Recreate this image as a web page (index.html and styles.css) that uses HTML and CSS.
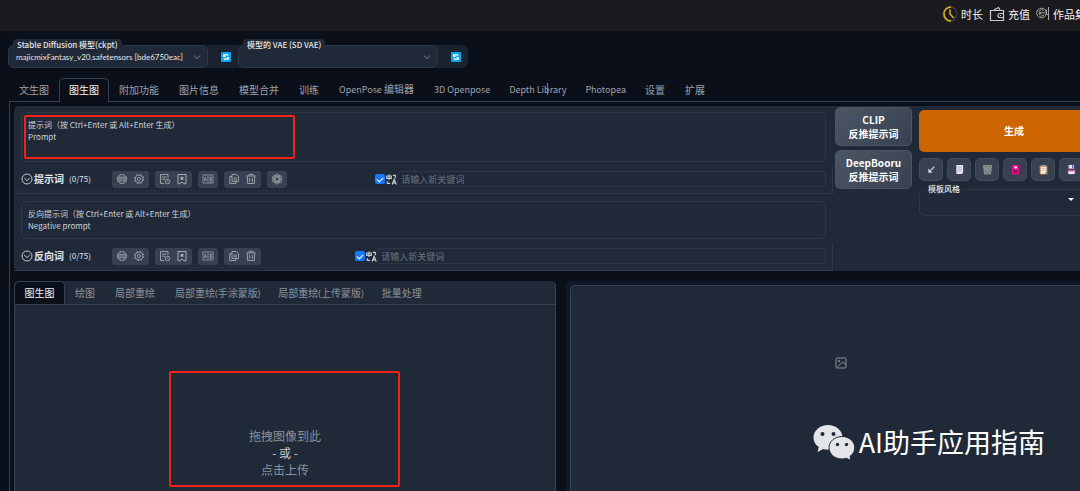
FILE: index.html
```html
<!DOCTYPE html>
<html lang="zh-CN">
<head>
<meta charset="utf-8">
<title>Stable Diffusion</title>
<link rel="stylesheet" href="styles.css">
</head>
<body>
<svg class="sprite" aria-hidden="true">
  <symbol id="refresh" viewBox="0 0 10 10"><rect width="10" height="10" rx="1" fill="#0aa5ee"/><path d="M2.5 4.6V2.6M2.5 4.3h2M2.7 4.1c.8-1.7 3.4-2 4.5-.4M7.5 5.4v2M7.5 5.7h-2M7.3 5.9c-.8 1.7-3.4 2-4.5.4" fill="none" stroke="#fff" stroke-width="1.2"/></symbol>
  <symbol id="chev" viewBox="0 0 8 8"><path d="M1 2.5l3 3 3-3" fill="none" stroke="#7d8590"/></symbol>
  <symbol id="fold" viewBox="0 0 12 12"><circle cx="6" cy="6" r="5" fill="none" stroke="#c3c7cd"/><path d="M3.2 5l2.8 2.6L8.8 5" fill="none" stroke="#c3c7cd"/></symbol>
  <symbol id="globe" viewBox="0 0 12 12"><g fill="none" stroke="#8f959e"><circle cx="6" cy="6" r="4.6"/><path d="M1.5 4.3h9M1.5 6h9M1.5 7.8h9"/><ellipse cx="6" cy="6" rx="2.2" ry="4.6" stroke-width=".6"/></g></symbol>
  <symbol id="gear" viewBox="0 0 12 12"><g fill="none" stroke="#8f959e"><circle cx="6" cy="6" r="3.9"/><circle cx="6" cy="6" r="4.7" stroke-dasharray="1.8 1.9"/><circle cx="6" cy="6" r="1.6"/></g></symbol>
  <symbol id="history" viewBox="0 0 12 12"><g fill="none" stroke="#9aa0a8"><path d="M9 5V1.5H1.5v9H5M3 4h4.5M3 6.2h3"/><circle cx="8.5" cy="8.5" r="2.3"/><path d="M8.5 7.3v1.4h1" stroke-width=".7"/></g></symbol>
  <symbol id="mark" viewBox="0 0 12 12"><path d="M2 1.5h8v9.2H8L6 9l-2 1.7H2z" fill="none" stroke="#a9aeb5"/><path d="M6 3l.7 1.4 1.5.2-1.1 1 .3 1.5L6 6.4l-1.4.7.3-1.5-1.1-1 1.5-.2z" fill="#b9bdc3"/></symbol>
  <symbol id="lang" viewBox="0 0 12 12"><g fill="none" stroke="#8f959e" stroke-width=".9"><path d="M5 2H1v8h4M7 2h4v8H7M6 1v10M2.2 8l1.2-4 1.2 4M2.6 6.8h1.6M7.4 4.5h2.8M7.4 6.2h2.8M8.8 3.5v5M7.5 8.2h2.5"/></g></symbol>
  <symbol id="copy" viewBox="0 0 12 12"><g fill="none" stroke="#9aa0a8"><path d="M4 1.5h4.5L10.5 3.500v5H4z"/><path d="M4 3.500H1.800v7H8v-2M5.500 5h3.500M5.500 6.800h3.500"/></g></symbol>
  <symbol id="trash" viewBox="0 0 12 12"><path d="M1 3h10M4 3V1.300h4V3M2.300 3.500l.4 7h6.600l.4-7M4.700 5v4M7.300 5v4" fill="none" stroke="#9aa0a8"/></symbol>
  <symbol id="ai" viewBox="0 0 12 12"><g fill="none" stroke="#8f959e" stroke-width=".9"><circle cx="6" cy="6" r="2"/><ellipse cx="6" cy="6" rx="2.600" ry="5"/><ellipse cx="6" cy="6" rx="2.600" ry="5" transform="rotate(60 6 6)"/><ellipse cx="6" cy="6" rx="2.600" ry="5" transform="rotate(120 6 6)"/></g></symbol>
  <symbol id="trans" viewBox="0 0 12 12"><g fill="none" stroke="#c9ccd1" stroke-width="1.300"><path d="M.8 2.200h5v2.500h-5zM3.300.5v6M7.500 1.500h2.600v3M1.500 8v2.300H4.500M6.700 11.500L8.900 5.800l2.200 5.700M7.500 9.700h2.900"/></g></symbol>
</svg>

<header class="topbar">
  <a class="toplink" href="#"><svg class="ic16" viewBox="0 0 16 16" fill="none"><circle cx="8" cy="8" r="7" stroke="#3a3a40" stroke-width="1.500"/><path d="M9 15A7 7 0 1 1 9 1M8 3.500V8l3.800 4" stroke="#e3b712" stroke-width="1.500"/></svg>时长</a>
  <a class="toplink" href="#"><svg class="ic16" viewBox="0 0 16 16" fill="none" stroke="#c8c8ca" stroke-width="1.200"><path d="M1.500 4.500h13v10h-13zM5 4l4.500-2.500L11 4M14.500 7.500H11a2 2 0 0 0 0 4h3.500M11 9.500h1"/></svg>充值</a>
  <a class="toplink" href="#"><svg class="ic14" viewBox="0 0 14 14" fill="none" stroke="#a5a5a8"><circle cx="5.500" cy="6" r="4.800"/><path d="M12.500 0v13M10.500 2.500v5h2M2.500 4.500l3-2 2 1M3 8l3-2.500 3 .5M4.500 9.500L8 8"/><circle cx="4" cy="6" r=".8"/></svg>作品集</a>
</header>

<main class="app">
  <div class="quick">
    <div class="field">
      <label class="chip" for="ckpt">Stable Diffusion 模型(ckpt)</label>
      <select id="ckpt" class="select"><option>majicmixFantasy_v20.safetensors [bde6750eac]</option></select>
      <svg class="chev"><use href="#chev"/></svg>
    </div>
    <button class="refresh" aria-label="刷新模型"><svg><use href="#refresh"/></svg></button>
    <div class="field">
      <label class="chip" for="vae">模型的 VAE (SD VAE)</label>
      <select id="vae" class="select"><option></option></select>
      <svg class="chev"><use href="#chev"/></svg>
    </div>
    <button class="refresh" aria-label="刷新 VAE"><svg><use href="#refresh"/></svg></button>
  </div>

  <nav class="tabs">
    <button class="tab">文生图</button><button class="tab active">图生图</button><button class="tab">附加功能</button><button class="tab">图片信息</button><button class="tab">模型合并</button><button class="tab">训练</button><button class="tab"><span class="latin">OpenPose</span> 编辑器</button><button class="tab latin">3D Openpose</button><button class="tab latin pointed">Depth Library</button><button class="tab latin">Photopea</button><button class="tab">设置</button><button class="tab">扩展</button>
  </nav>

  <div class="workspace">
    <section class="prompts">
      <div class="prompt-col">
        <div class="prompt-wrap">
          <textarea class="prompt tall" aria-label="提示词" placeholder="提示词（按 Ctrl+Enter 或 Alt+Enter 生成）&#10;Prompt"></textarea>
          <div class="callout callout-prompt"></div>
        </div>
        <div class="bar">
          <svg class="ic12"><use href="#fold"/></svg><b class="bar-title">提示词</b><span class="count">(0/75)</span>
          <div class="groups">
            <div class="group"><button class="mini" aria-label="语言"><svg><use href="#globe"/></svg></button><button class="mini" aria-label="设置"><svg><use href="#gear"/></svg></button></div>
            <div class="group"><button class="mini" aria-label="历史"><svg><use href="#history"/></svg></button><button class="mini" aria-label="收藏"><svg><use href="#mark"/></svg></button></div>
            <div class="group"><button class="mini" aria-label="翻译"><svg><use href="#lang"/></svg></button></div>
            <div class="group"><button class="mini" aria-label="复制"><svg><use href="#copy"/></svg></button><button class="mini" aria-label="删除"><svg><use href="#trash"/></svg></button></div>
            <div class="group"><button class="mini" aria-label="AI"><svg><use href="#ai"/></svg></button></div>
          </div>
          <div class="keyword">
            <input class="check" type="checkbox" id="k1" checked><label class="trans" for="k1" aria-label="自动翻译"><svg><use href="#trans"/></svg></label>
            <input class="kw" type="text" aria-label="关键词" placeholder="请输入新关键词">
          </div>
        </div>
        <div class="prompt-wrap second">
          <textarea class="prompt" aria-label="反向提示词" placeholder="反向提示词（按 Ctrl+Enter 或 Alt+Enter 生成）&#10;Negative prompt"></textarea>
        </div>
        <div class="bar">
          <svg class="ic12"><use href="#fold"/></svg><b class="bar-title">反向词</b><span class="count">(0/75)</span>
          <div class="groups">
            <div class="group"><button class="mini" aria-label="语言"><svg><use href="#globe"/></svg></button><button class="mini" aria-label="设置"><svg><use href="#gear"/></svg></button></div>
            <div class="group"><button class="mini" aria-label="历史"><svg><use href="#history"/></svg></button><button class="mini" aria-label="收藏"><svg><use href="#mark"/></svg></button></div>
            <div class="group"><button class="mini" aria-label="翻译"><svg><use href="#lang"/></svg></button></div>
            <div class="group"><button class="mini" aria-label="复制"><svg><use href="#copy"/></svg></button><button class="mini" aria-label="删除"><svg><use href="#trash"/></svg></button></div>
          </div>
          <div class="keyword wide">
            <input class="check" type="checkbox" id="k2" checked><label class="trans" for="k2" aria-label="自动翻译"><svg><use href="#trans"/></svg></label>
            <input class="kw" type="text" aria-label="反向关键词" placeholder="请输入新关键词">
          </div>
        </div>
      </div>

      <div class="interrogate">
        <button class="inter">CLIP<br>反推提示词</button>
        <button class="inter">DeepBooru<br>反推提示词</button>
      </div>

      <div class="actions">
        <button class="generate">生成</button>
        <div class="tools">
          <button class="tool" aria-label="读取参数"><svg viewBox="0 0 12 12"><path d="M9 3L4 8" fill="none" stroke="#d5d7da" stroke-width="1.200"/><path d="M2.500 5v4.500H7z" fill="#d5d7da"/></svg></button>
          <button class="tool" aria-label="文本"><svg viewBox="0 0 12 12"><path d="M2.500 1h7.500v8.500L8.500 11h-6z" fill="#e4dff0"/><path d="M4 3.500h4.500M4 5.500h4.500M4 7.500h4.500" stroke="#a9a1bd" stroke-width=".7"/></svg></button>
          <button class="tool" aria-label="清空"><svg viewBox="0 0 12 12"><path d="M1.500 1.500h9L9.300 11H2.700z" fill="#70777b" stroke="#a0a6a8" stroke-width=".7"/><path d="M2 3l7 7M5 2l5 5M10 3l-7 7M7 2L2 7" stroke="#b7bbbd" stroke-width=".6"/></svg></button>
          <button class="tool" aria-label="卡片"><svg viewBox="0 0 12 12"><rect x="2" y="1" width="8" height="10.500" rx="1" fill="#e50d8b"/><circle cx="6.200" cy="3.800" r="1.500" fill="#ffe3f4"/><path d="M3.500 6.500h5v3.500h-5z" fill="#9d1168"/></svg></button>
          <button class="tool" aria-label="粘贴"><svg viewBox="0 0 12 12"><rect x="1.800" y="1.500" width="8.500" height="10" rx="1" fill="#c58343"/><path d="M3 3h6v5.500L7.500 10.500H3z" fill="#f1eef3"/><path d="M4 1h4v2H4z" fill="#9ba1aa"/><path d="M4 5h4M4 7h4" stroke="#aaa5b3" stroke-width=".7"/></svg></button>
          <button class="tool" aria-label="保存"><svg viewBox="0 0 12 12"><path d="M1 1h8.500L11 2.500V11H1z" fill="#4b4175"/><path d="M3 1h5.500v4H3z" fill="#e9e6ef"/><path d="M6.500 1.500h1.300v2.500H6.500z" fill="#4b4175"/><path d="M2.500 6.500h7V11h-7z" fill="#f5e9f0"/><path d="M2.500 6.500h7v1.500h-7z" fill="#dd4a83"/></svg></button>
        </div>
        <div class="field style-field">
          <label class="chip" for="style">模板风格</label>
          <select id="style" class="select"><option></option></select>
          <span class="caret"></span>
        </div>
      </div>
    </section>

    <div class="panels">
      <section class="input-panel">
        <nav class="subtabs">
          <button class="subtab active">图生图</button><button class="subtab">绘图</button><button class="subtab">局部重绘</button><button class="subtab long">局部重绘(手涂蒙版)</button><button class="subtab long">局部重绘(上传蒙版)</button><button class="subtab">批量处理</button>
        </nav>
        <button class="drop"><span>拖拽图像到此</span><span class="or">- 或 -</span><span>点击上传</span></button>
        <div class="callout callout-drop"></div>
      </section>
      <section class="output-panel">
        <div class="gallery"><svg class="ic12" viewBox="0 0 12 12" fill="none" stroke="#8a919c"><rect x="1" y="1" width="10" height="10" rx="1"/><path d="M2.500 10l5-5L11 8"/><circle cx="4" cy="4" r=".8"/></svg></div>
      </section>
    </div>
  </div>
</main>

<div class="watermark">
  <svg class="wechat" viewBox="0 0 42 37"><path d="M15 1C7 1 .5 6.500.5 13.500c0 4 2 7.300 5.300 9.600L4.500 28l5.500-3c1.500.5 3.200.7 5 .7 8 0 14.500-5.200 14.500-12.200S23 1 15 1z" fill="#e4e5e7"/><path d="M29 12.500c-7.300 0-13 5-13 11.200S21.700 35 29 35c1.500 0 3-.2 4.400-.7l4.600 2-1-4c3-2 4.700-5 4.700-8.600 0-6.200-5.400-11.200-12.700-11.200z" fill="#e4e5e7" stroke="#1f2937"/><g fill="#1f2937"><circle cx="9.500" cy="10" r="2"/><circle cx="20.500" cy="10" r="2"/><circle cx="24.500" cy="20.500" r="1.700"/><circle cx="33.500" cy="20.500" r="1.700"/></g></svg>
  <span>AI助手应用指南</span>
</div>
</body>
</html>
```
FILE: styles.css
```css
* { box-sizing: border-box; }

:root {
  --bg: #0b0f19;
  --block: #1f2937;
  --line: #374151;
  --soft: #2d3746;
}

body {
  margin: 0;
  min-height: 100vh;
  display: flex;
  flex-direction: column;
  position: relative;
  overflow: hidden;
  background: var(--bg);
  color: #e5e7eb;
  font-family: "Noto Sans CJK SC", "Noto Sans", sans-serif;
  font-size: 10px;
  line-height: 14px;
}

button, input, select, textarea { font: inherit; color: inherit; margin: 0; padding: 0; border: 0; background: none; }
svg { display: block; flex: none; }
.sprite { position: absolute; width: 0; height: 0; }
.ic12 { width: 12px; height: 12px; }
.ic14 { width: 14px; height: 14px; }
.ic16 { width: 16px; height: 16px; }

.topbar {
  height: 31px;
  display: flex;
  justify-content: flex-end;
  align-items: center;
  gap: 6px;
  margin-right: -6px;
  padding-bottom: 3px;
  background: #1b1a1f;
}
.toplink { display: flex; align-items: center; gap: 3px; flex: none; color: #f2f2f2; font-size: 11px; text-decoration: none; }

.app { flex: 1; display: flex; flex-direction: column; padding: 14px 0 0 8px; }

.quick { display: flex; align-self: flex-start; height: 23px; background: #1a2230; border-radius: 6px; }
.field { position: relative; width: 200px; border: 1px solid var(--soft); border-radius: 6px; background: var(--block); }
.chip {
  position: absolute;
  top: -7px;
  left: 4px;
  padding: 0 4px;
  border-radius: 4px;
  background: var(--block);
  font-size: 8px;
  font-weight: 500;
  line-height: 12px;
  white-space: nowrap;
}
.select { width: 100%; height: 100%; padding: 0 20px 0 7px; appearance: none; font-family: Lato, "Noto Sans CJK SC", sans-serif; font-size: 8px; border-radius: 6px; }
.chev { position: absolute; right: 6px; top: 7px; width: 8px; height: 8px; pointer-events: none; }
.refresh { width: 30px; display: grid; place-items: center; padding-left: 6px; }
.refresh svg { width: 10px; height: 10px; }

.tabs { display: flex; margin-top: 10px; padding-left: 1px; }
.tab { height: 23px; padding: 0 9px 0 10px; color: #9ca3af; white-space: nowrap; }
.tab:not(.latin) { padding-right: 10px; }
.latin { font-size: 9px; }
.tab.active {
  padding: 0 9px;
  color: #f3f4f6;
  border: 1px solid var(--line);
  border-bottom: 0;
  border-radius: 5px 5px 0 0;
  background: var(--bg);
  position: relative;
}
.tab.active::after { content: ""; position: absolute; left: 0; right: 0; bottom: -1px; height: 1px; background: var(--bg); }
.pointed { position: relative; }
.pointed::after { content: ""; position: absolute; left: 48px; top: 5px; width: 1px; height: 12px; background: #737b88; }

.workspace { flex: 1; display: flex; flex-direction: column; gap: 10px; margin-left: 1px; padding: 4px 0 0 4px; border: solid var(--line); border-width: 1px 0 0 1px; }

.prompts { display: flex; background: var(--block); border-radius: 5px 0 0 5px; }
.prompt-col { flex: 1; min-width: 0; display: flex; flex-direction: column; }
.prompt-wrap { position: relative; padding: 6px 7px 4px; }
.prompt-wrap.second { padding-top: 7px; }
.prompt {
  display: block;
  width: 100%;
  height: 38px;
  padding: 6px;
  border: 1px solid var(--soft);
  border-radius: 5px;
  resize: none;
  overflow: hidden;
  font-size: 8px;
  line-height: 12px;
}
.prompt.tall { height: 50px; }
.prompt::placeholder { color: #d1d5db; opacity: 1; }

.callout { position: absolute; border: 2px solid #f12316; border-radius: 2px; pointer-events: none; }
.callout-prompt { left: 10px; top: 9px; width: 271px; height: 44px; }

.bar {
  display: flex;
  align-items: center;
  height: 28px;
  padding: 0 6px 1px 7px;
  border: solid var(--soft);
  border-width: 0 1px 1px 0;
  background: repeating-linear-gradient(90deg, #2a3442 0 2px, transparent 2px 4px) 0 24px / 100% 1px no-repeat;
}
.bar-title { flex: none; width: 35px; margin-left: 1px; }
.count { flex: none; width: 43px; font-size: 8px; }
.groups { display: flex; flex: none; gap: 6px; }
.group { display: flex; height: 17px; gap: 6px; padding: 0 4px; border-radius: 3px; background: #374151; }
.group .mini + .mini { margin-left: -1px; }
.mini { width: 12px; display: grid; place-items: center; }
.mini svg { width: 12px; height: 12px; }
.trans svg { width: 11px; height: 11px; }
.keyword { display: flex; align-items: center; width: 56%; margin-left: auto; }
.keyword.wide { width: calc(56% + 20px); }
.check { appearance: none; flex: none; width: 10px; height: 10px; border-radius: 2px; background: #1677ff; display: grid; place-items: center; }
.check:checked::after { content: ""; width: 5px; height: 3px; border: solid #fff; border-width: 0 0 1px 1px; transform: rotate(-45deg); }
.trans { margin-left: 1px; }
.kw { flex: 1; min-width: 0; height: 16px; padding: 0 3px; border: 1px solid var(--soft); border-radius: 3px; font-size: 9px; }
.kw::placeholder { color: #6b7280; opacity: 1; }

.interrogate { display: flex; flex-direction: column; gap: 4px; width: 77px; margin: 1px 7px 0 2px; }
.inter { height: 39px; border: 1px solid #4b5563; border-radius: 5px; background: linear-gradient(135deg, #4b5563, #374151); color: #fff; font-weight: 700; }

.actions { width: 190px; flex: none; margin-right: -29px; padding-top: 4px; }
.generate { display: block; width: 100%; height: 42px; border-radius: 5px; background: #cc6500; color: #fff; font-weight: 700; }
.tools { display: flex; gap: 4px; margin-top: 6px; }
.tool { width: 24px; height: 23px; display: grid; place-items: center; flex: none; border: 1px solid #414b5a; border-radius: 5px; background: #374151; }
.tool svg { width: 11px; height: 11px; }
.style-field { width: 100%; height: 27px; margin-top: 8px; }
.caret { position: absolute; right: 34px; top: 8px; border: 3px solid transparent; border-top-color: #fff; border-bottom: 0; }

.panels { flex: 1; display: grid; grid-template-columns: 542fr 514fr; gap: 10px; }
.input-panel { position: relative; display: flex; flex-direction: column; background: var(--block); border: 1px solid var(--line); border-width: 0 1px; border-radius: 5px 5px 0 0; }
.subtabs { display: flex; height: 24px; border-bottom: 1px solid var(--line); font-family: Lato, "Noto Sans CJK SC", sans-serif; }
.subtab { padding: 0 10px; color: #8b929e; white-space: nowrap; }
.subtab.long { padding-right: 8px; }
.subtab.active { width: 50px; padding: 0 9px; border: 1px solid var(--line); border-width: 1px 1px 0 0; border-radius: 5px 5px 0 0; background: var(--bg); color: #f3f4f6; }
.drop { flex: 1; display: flex; flex-direction: column; align-items: center; padding-top: 122px; color: #8b929e; font-size: 12px; line-height: 17px; }
.or { color: #c6cad0; }
.callout-drop { left: 50%; top: 90px; width: 231px; height: 116px; margin-left: -116px; }

.output-panel { display: flex; padding: 4px 0 0 4px; background: #111827; border-radius: 5px 0 0 0; }
.gallery { flex: 1; padding: 71px 0 0 264px; border: solid var(--line); border-width: 1px 0 0 1px; border-radius: 5px 0 0 0; background: var(--block); }

.watermark { position: absolute; right: 35px; bottom: 29px; display: flex; align-items: center; gap: 4px; color: #fff; font-size: 27px; line-height: 40px; white-space: nowrap; }
.wechat { width: 42px; height: 37px; }
```
